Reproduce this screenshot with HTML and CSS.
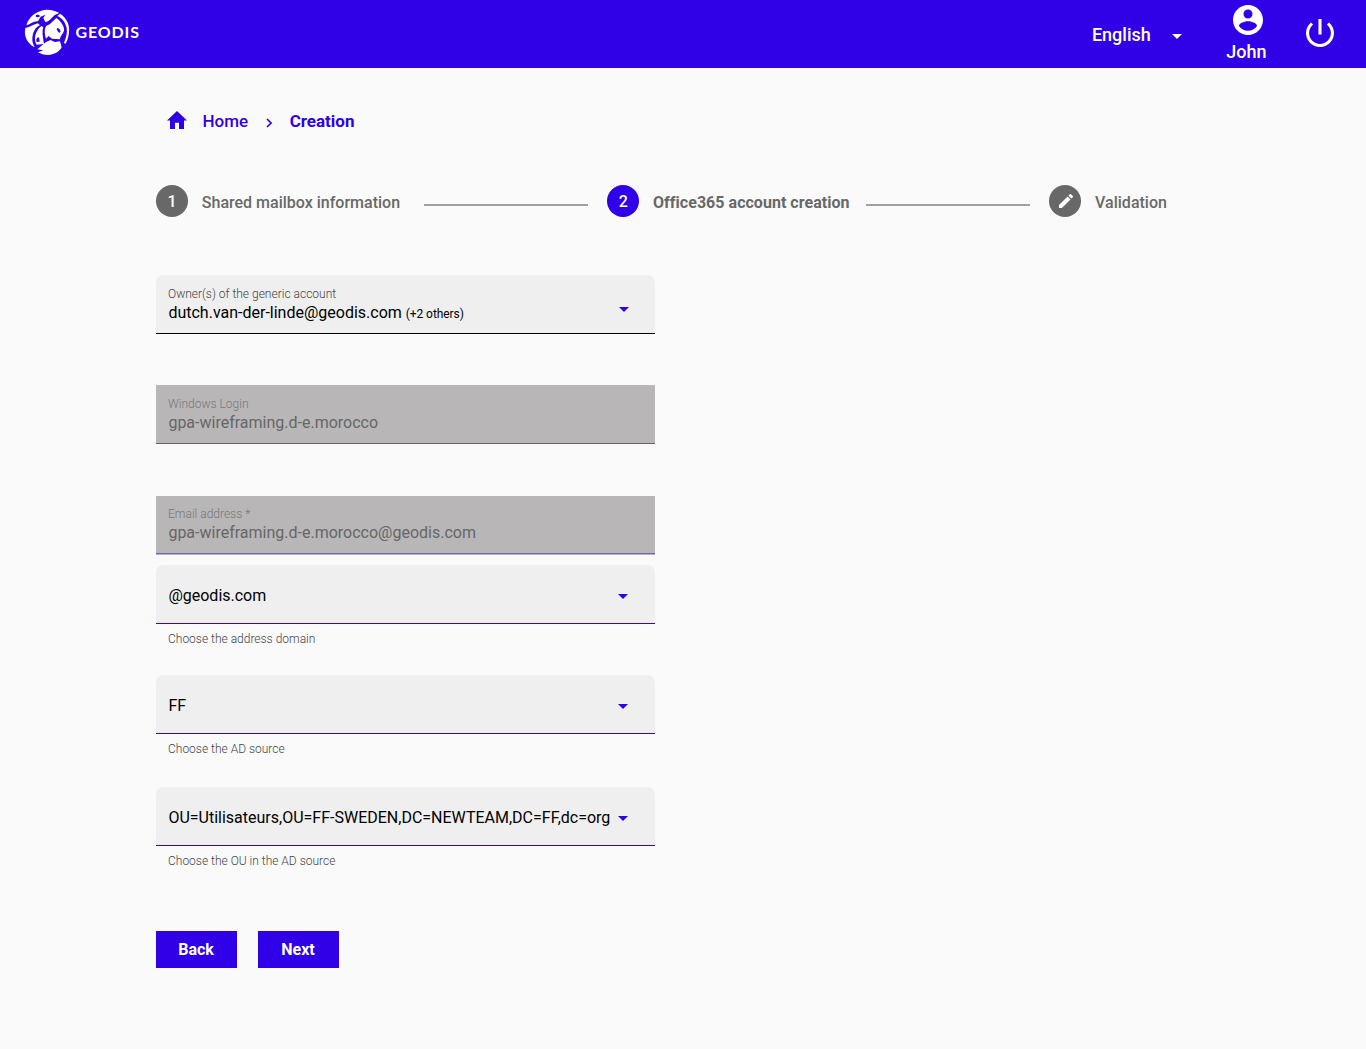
FILE: index.html
```
<!DOCTYPE html>
<html lang="en">
<head>
<meta charset="utf-8">
<title>Geodis - Creation</title>
<link rel="stylesheet" href="styles.css">
</head>
<body>
<header class="topbar">
  <svg class="logo" viewBox="0 0 120 48" width="120" height="48">
    <g transform="translate(-7 -9) scale(.3333)" fill="#fff">
      <path d="M32 72C42 46 66 30 94 29C108 29 120 33 130 39L118 44C108 50 102 64 88 66L82 54L88 44L74 50L66 64C54 62 44 72 32 76Z"/>
      <path d="M28 84C42 82 54 72 66 70L72 76C58 82 50 96 49 116C48 128 54 136 56 142C36 132 22 110 28 84Z"/>
      <path d="M76 78L82 82C77 96 81 112 84 132L62 134C54 122 54 96 76 78Z"/>
      <path d="M90 78C104 74 112 60 122 54C136 66 146 80 144 92C140 104 132 108 132 118L108 116L98 108L90 116C86 104 84 90 90 78Z"/>
      <path d="M132 41C154 54 164 80 158 104C156 116 152 126 148 132L144 128C152 110 154 96 152 84C148 66 138 54 124 48Z"/>
      <path d="M90 126L104 120L116 126L132 124L137 142C130 156 114 164 96 165C84 165 74 162 66 157L82 151L64 148Z"/>
      <g fill="#3000e7">
        <ellipse cx="65" cy="48" rx="6" ry="4"/>
        <ellipse cx="128" cy="91" rx="4" ry="8" transform="rotate(-35 128 91)"/>
        <path d="M62 126C59 118 62 113 69 112L71 125Z"/>
      </g>
    </g>
    <text class="wordmark" x="52.500" y="29.300" textLength="63.500" lengthAdjust="spacing">GEODIS</text>
  </svg>
  <div class="language">English
    <svg class="caret" viewBox="0 0 10 5" width="10" height="5"><path d="M0 0H10L5 5Z"/></svg>
  </div>
  <div class="user">
    <svg class="avatar" viewBox="2 2 20 20" width="30" height="30"><path fill="currentColor" d="M12 2C6.480 2 2 6.480 2 12s4.480 10 10 10 10-4.480 10-10S17.520 2 12 2zm0 3c1.660 0 3 1.340 3 3s-1.340 3-3 3-3-1.340-3-3 1.340-3 3-3zm0 14.200c-2.500 0-4.710-1.280-6-3.220.030-1.990 4-3.080 6-3.080 1.990 0 5.970 1.090 6 3.080-1.290 1.940-3.500 3.220-6 3.220z"/></svg>
    <span class="user-name">John</span>
  </div>
  <svg class="power" viewBox="3 3 18 18" width="28" height="28"><path fill="currentColor" d="M13 3h-2v10h2V3zm4.830 2.170l-1.420 1.420C17.990 7.860 19 9.810 19 12c0 3.870-3.130 7-7 7s-7-3.130-7-7c0-2.190 1.010-4.140 2.580-5.420L6.170 5.170C4.230 6.820 3 9.260 3 12c0 4.970 4.030 9 9 9s9-4.030 9-9c0-2.740-1.230-5.180-3.170-6.830z"/></svg>
</header>
<main class="page">
  <nav class="breadcrumb">
    <svg class="home" viewBox="2 3 20 17" width="20" height="18" preserveAspectRatio="none"><path fill="currentColor" d="M10 20v-6h4v6h5v-8h3L12 3 2 12h3v8z"/></svg>
    <span class="crumb">Home</span>
    <svg class="chevron" viewBox="0 0 6 10" width="6" height="10"><path d="M1 1L5 5L1 9" fill="none" stroke="currentColor" stroke-width="1.600"/></svg>
    <span class="crumb crumb-current">Creation</span>
  </nav>
  <div class="stepper">
    <span class="badge">1</span><span class="step-label">Shared mailbox information</span>
    <span class="step-line"></span>
    <span class="badge badge-active">2</span><span class="step-label step-label-active">Office365 account creation</span>
    <span class="step-line step-line-last"></span>
    <span class="badge"><svg class="pencil" viewBox="3 3 18 18" width="14" height="14"><path fill="currentColor" d="M3 17.250V21h3.750L17.810 9.940l-3.750-3.750L3 17.250zM20.710 7.040c.390-.390.390-1.020 0-1.410l-2.340-2.340c-.390-.390-1.020-.390-1.410 0l-1.830 1.830 3.750 3.750 1.830-1.830z"/></svg></span><span class="step-label">Validation</span>
  </div>
  <form class="form">
    <div class="group">
      <div class="field field-owner">
        <div class="text"><span class="label">Owner(s) of the generic account</span><span class="value">dutch.van-der-linde@geodis.com <span class="more">(+2 others)</span></span></div>
        <svg class="caret" viewBox="0 0 10 5" width="10" height="5"><path d="M0 0H10L5 5Z"/></svg>
      </div>
    </div>
    <div class="group">
      <div class="field field-disabled">
        <div class="text"><span class="label">Windows Login</span><span class="value">gpa-wireframing.d-e.morocco</span></div>
      </div>
    </div>
    <div class="group group-email">
      <div class="field field-disabled field-email">
        <div class="text"><span class="label">Email address *</span><span class="value">gpa-wireframing.d-e.morocco@geodis.com</span></div>
      </div>
    </div>
    <div class="group">
      <div class="field field-select">
        <span class="value">@geodis.com</span>
        <svg class="caret" viewBox="0 0 10 5" width="10" height="5"><path d="M0 0H10L5 5Z"/></svg>
      </div>
      <span class="hint">Choose the address domain</span>
    </div>
    <div class="group group-source">
      <div class="field field-select">
        <span class="value">FF</span>
        <svg class="caret" viewBox="0 0 10 5" width="10" height="5"><path d="M0 0H10L5 5Z"/></svg>
      </div>
      <span class="hint">Choose the AD source</span>
    </div>
    <div class="group">
      <div class="field field-select">
        <span class="value">OU=Utilisateurs,OU=FF-SWEDEN,DC=NEWTEAM,DC=FF,dc=org</span>
        <svg class="caret" viewBox="0 0 10 5" width="10" height="5"><path d="M0 0H10L5 5Z"/></svg>
      </div>
      <span class="hint">Choose the OU in the AD source</span>
    </div>
    <div class="actions">
      <button class="button" type="button">Back</button>
      <button class="button" type="button">Next</button>
    </div>
  </form>
</main>
</body>
</html>
```
FILE: styles.css
```
* { box-sizing: border-box; }
body {
  margin: 0;
  min-height: 1049px;
  background: #fafafa;
  font-family: Roboto, "Liberation Sans", sans-serif;
  font-size: 16px;
}
svg { display: block; flex: none; }
.topbar {
  display: flex;
  height: 68px;
  padding: 0 32px 0 24px;
  background: #3000e7;
  color: #fff;
  font-size: 18px;
  font-weight: 500;
}
.logo { margin: 9px auto 0 -1px; }
.wordmark {
  fill: #fff;
  font-family: Lato, sans-serif;
  font-size: 16px;
  font-weight: 700;
}
.caret { fill: #3000e7; }
.language {
  display: flex;
  align-items: center;
  gap: 21.5px;
  margin-right: 44px;
}
.language .caret { fill: #fff; margin-top: 4px; }
.user {
  display: flex;
  flex-direction: column;
  align-items: center;
  padding-top: 5px;
  margin-right: 39.5px;
}
.avatar { margin-left: 3px; }
.user-name { line-height: 21px; margin-top: 6px; }
.power { margin-top: 19px; }
.page { padding: 0 156px; }
.breadcrumb {
  display: flex;
  align-items: center;
  height: 24px;
  margin-top: 41px;
  padding-left: 11px;
  color: #3000e7;
  font-size: 17px;
}
.home { margin-top: -2px; }
.crumb { margin: -1px 0 0 15.5px; font-weight: 500; line-height: 24px; }
.chevron { margin: 3px 2px 0 18px; }
.crumb-current { font-weight: 700; }
.stepper {
  display: flex;
  align-items: center;
  height: 32px;
  margin-top: 52px;
  color: #686868;
}
.badge {
  display: flex;
  flex: none;
  align-items: center;
  justify-content: center;
  width: 32px;
  height: 32px;
  border-radius: 50%;
  background: #686868;
  color: #fff;
  font-weight: 500;
}
.badge-active { background: #3000e7; }
.pencil { margin-left: 2px; }
.step-label { margin: 2px 0 0 13.8px; font-weight: 500; white-space: nowrap; }
.step-label-active { font-weight: 700; letter-spacing: .03px; }
.step-line {
  flex: none;
  width: 164px;
  height: 2px;
  margin: 8px 19px 0 24.2px;
  background: #a0a0a0;
}
.step-line-last { margin-left: 16.8px; }
.form { width: 499px; margin-top: 58px; }
.group { height: 110px; }
.group-email { height: 70px; padding-top: 1px; }
.group-source { height: 112px; }
.field {
  display: flex;
  align-items: center;
  justify-content: space-between;
  height: 59px;
  padding: 0 26px 0 12px;
  border-bottom: 1px solid #000;
  border-radius: 7px 7px 0 0;
  background: #efefef;
  color: #000;
}
.field-owner .caret { margin-top: 10px; }
.text { display: flex; flex-direction: column; }
.label { font-size: 12px; font-weight: 300; line-height: 18px; color: #444; }
.value { line-height: 19px; white-space: nowrap; padding-left: .4px; }
.more { font-size: 12px; letter-spacing: -.08px; }
.field-disabled {
  padding-bottom: 2px;
  border-radius: 0;
  border-color: #656365;
  background: #b8b6b7;
  color: #666;
}
.field-disabled .label { color: #777; }
.field-email {
  height: 58px;
  border-color: #7460b8;
  box-shadow: 0 1px #b8b6b7;
}
.field-select { padding-right: 27px; padding-top: 3px; border-color: #3000e7; }
.field-select .caret { margin-top: 1px; }
.hint {
  display: block;
  padding: 6px 12px;
  font-size: 12px;
  font-weight: 300;
  line-height: 18px;
  color: #444;
}
.actions { display: flex; gap: 21px; margin-top: 34px; }
.button {
  width: 81px;
  height: 37px;
  padding: 0 1px 0 0;
  border: 0;
  background: #3000e7;
  color: #fff;
  font: 700 16px Roboto, sans-serif;
}
```
